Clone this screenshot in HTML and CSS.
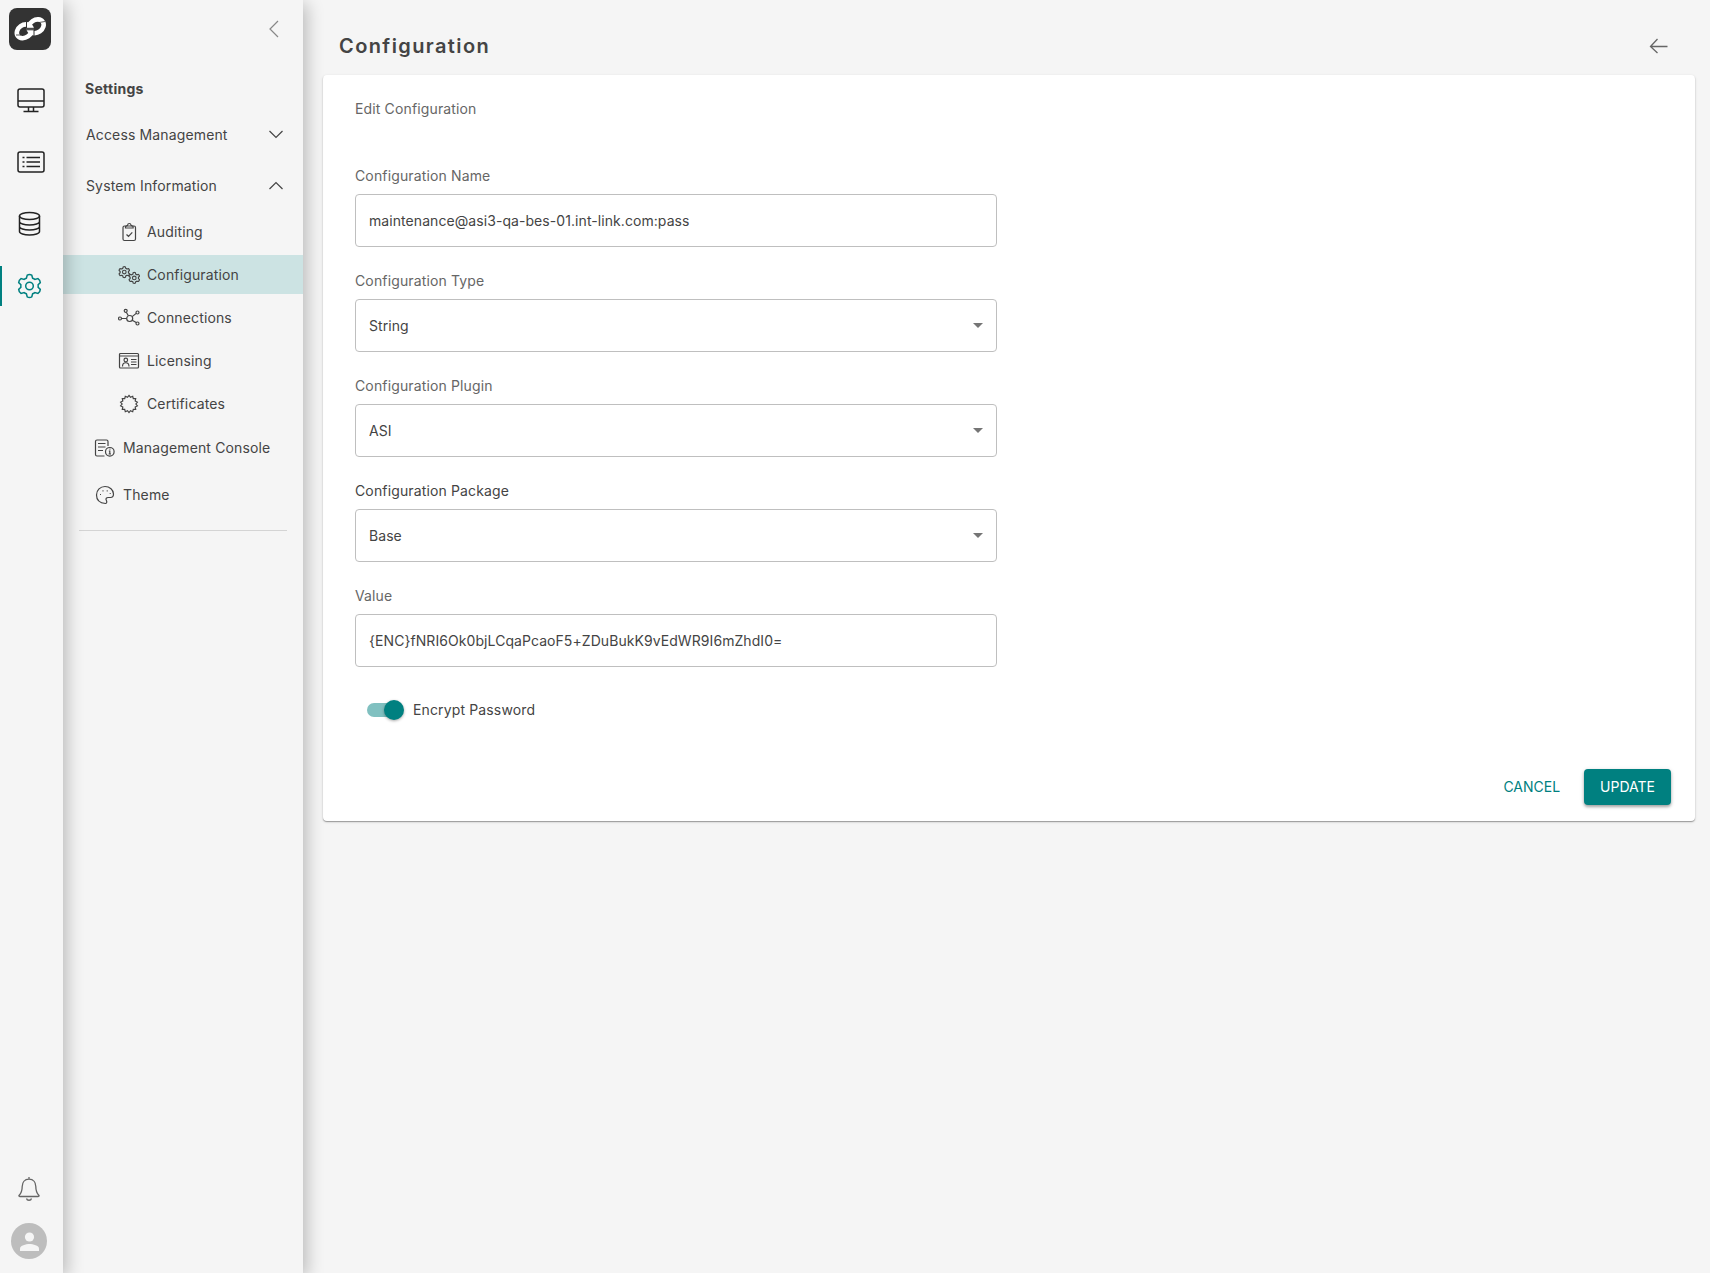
FILE: index.html
```html
<!DOCTYPE html>
<html lang="en">
<head>
<meta charset="utf-8">
<meta name="viewport" content="width=device-width, initial-scale=1">
<title>Configuration</title>
<link rel="stylesheet" href="styles.css">
</head>
<body>
<div class="shell">
  <nav class="rail" aria-label="Main">
    <a class="logo" href="#" aria-label="Home">
      <svg width="42" height="42" viewBox="0 0 42 42">
        <rect width="42" height="42" rx="8" fill="#333"/>
        <g fill="none" stroke="#fff" stroke-width="4.600">
          <ellipse cx="15.300" cy="23.300" rx="8" ry="6.300" transform="rotate(-35 15.300 23.300)"/>
          <ellipse cx="27.200" cy="18.300" rx="8" ry="6.300" transform="rotate(-35 27.200 18.300)"/>
        </g>
        <path d="M17.500 11.500v8.800h7.500M25 30v-8.200h-7.500" fill="none" stroke="#333" stroke-width="1"/>
        <path d="M16.500 21h9.500M7 27h5M30 14.500l6-1" stroke="#333" stroke-width=".8"/>
      </svg>
    </a>
    <ul class="rail-list">
      <li><a class="rail-link" href="#" aria-label="Monitor">
        <svg width="28" height="28" viewBox="0 0 28 28"><rect x="1" y="3" width="26" height="18" rx="2"/><path d="M1 15h26M11.500 21v4M16.500 21v4M6.500 25.500h15"/></svg></a></li>
      <li><a class="rail-link" href="#" aria-label="Lists">
        <svg width="28" height="28" viewBox="0 0 28 28"><rect x="1" y="4" width="26" height="20" rx="2"/><path d="M9.500 9.500H23M9.500 14H23M9.500 18.500H23M5.500 9.500h2M5.500 14h2M5.500 18.500h2"/></svg></a></li>
      <li><a class="rail-link" href="#" aria-label="Data">
        <svg width="28" height="28" viewBox="1 0 28 28"><ellipse cx="13.500" cy="6" rx="10" ry="3.500"/><path d="M3.500 6v15.500c0 2 4.500 3.500 10 3.500s10-1.500 10-3.500V6M3.500 11.500c0 2 4.500 3.500 10 3.500s10-1.500 10-3.500M3.500 16.500c0 2 4.500 3.500 10 3.500s10-1.500 10-3.500"/></svg></a></li>
      <li><a class="rail-link rail-link-active" href="#" aria-label="Settings" aria-current="page">
        <svg width="28" height="28" viewBox="1 0 28 28"><g id="gear"><circle cx="13.500" cy="14" r="3.800"/><path d="M11.200 3.200 Q13.500 2 15.800 3.200 L16.600 6.200 Q17.900 6.600 18.900 7.400 L22 6.600 Q24.200 8 24.300 10.600 L22.100 12.700 Q22.300 14 22.100 15.300 L24.300 17.400 Q24.200 20 22 21.400 L18.900 20.600 Q17.900 21.400 16.600 21.800 L15.800 24.800 Q13.500 26 11.200 24.800 L10.400 21.800 Q9.100 21.400 8.100 20.600 L5 21.400 Q2.800 20 2.700 17.400 L4.900 15.300 Q4.700 14 4.900 12.700 L2.700 10.600 Q2.800 8 5 6.600 L8.100 7.400 Q9.100 6.600 10.400 6.200Z"/></g></svg></a></li>
    </ul>
    <div class="rail-foot">
      <button class="icon-button" type="button" aria-label="Notifications">
        <svg width="24" height="26" viewBox="0 0 24 26" fill="none" stroke="#666" stroke-width="1.300"><path d="M12 1v2.200M12 3.200c-4.500 0-6.800 3.300-6.800 7.300 0 5-1 6.700-3 8.700-.6.700-.4 1.300.6 1.300h18.400c1 0 1.200-.6.600-1.300-2-2-3-3.700-3-8.700 0-4-2.300-7.300-6.800-7.300zM9.500 22.500c.6 2.300 4.400 2.300 5 0"/></svg>
      </button>
      <button class="icon-button" type="button" aria-label="Account">
        <svg width="36" height="36" viewBox="0 0 36 36"><circle cx="18" cy="18" r="18" fill="#bdbdbd"/><circle cx="18.500" cy="14" r="4.600" fill="#f5f5f5"/><path d="M9 28v-2.500c0-3 6-4.600 9.500-4.600S28 22.500 28 25.500V28z" fill="#f5f5f5"/></svg>
      </button>
    </div>
  </nav>

  <aside class="sidebar">
    <button class="icon-button collapse" type="button" aria-label="Collapse menu">
      <svg width="10" height="18" viewBox="0 0 10 18" fill="none" stroke="#888" stroke-width="1.200"><path d="M9 1 1 9l8 8"/></svg>
    </button>
    <h2 class="side-title">Settings</h2>
    <button class="group" type="button" aria-expanded="false">Access Management
      <svg width="16" height="10" viewBox="0 0 16 10"><path d="M1.500 1 8 7.500 14.500 1"/></svg></button>
    <button class="group" type="button" aria-expanded="true">System Information
      <svg width="16" height="10" viewBox="0 0 16 10"><path d="M1.500 8 8 1.500 14.500 8"/></svg></button>
    <ul class="submenu">
      <li><a class="sub-link" href="#">
        <svg width="22" height="20" viewBox="0 0 22 20"><rect x="5" y="4" width="12.500" height="14.500" rx="1.500"/><path d="M7.500 6V4.500l2-1.200c.4-2.400 3.200-2.400 3.600 0l2 1.200V6zM8.500 12.500l2 1.800 3.800-4"/></svg>Auditing</a></li>
      <li><a class="sub-link sub-link-active" href="#" aria-current="page">
        <svg width="22" height="20" viewBox="0 0 22 20"><g stroke-width="2.400"><use href="#gear" transform="translate(-.200 .400) scale(.480)"/><use href="#gear" transform="translate(9.800 6.200) scale(.480)"/></g></svg>Configuration</a></li>
      <li><a class="sub-link" href="#">
        <svg width="22" height="20" viewBox="0 0 22 20"><circle cx="11.700" cy="10.500" r="3"/><circle cx="2" cy="10.500" r="1.500"/><circle cx="7.700" cy="2.800" r="1.500"/><circle cx="19.500" cy="4.500" r="1.500"/><circle cx="19.500" cy="15.500" r="1.500"/><path d="M3.500 10.500h5.200M8.300 4.200l2.100 3.600M14.200 8.600l4-3.200M14.200 12.200l4 2.400"/></svg>Connections</a></li>
      <li><a class="sub-link" href="#">
        <svg width="22" height="20" viewBox="0 0 22 20"><rect x="1.500" y="2.500" width="19" height="14.500" rx="1"/><path d="M1.500 5h19M4.500 15.500c0-5 6.500-5 6.500 0M13 8.500h5.500M13 11h5.500M13 13.500h5.500"/><circle cx="7.800" cy="9" r="1.800"/></svg>Licensing</a></li>
      <li><a class="sub-link" href="#">
        <svg width="22" height="20" viewBox="0 0 22 20"><path d="M11 1.400 12.500 3.300 14.700 2.300 15.300 4.600 17.700 4.600 17.200 7 19.400 8.100 17.900 10 19.400 11.900 17.200 13 17.700 15.400 15.300 15.400 14.700 17.700 12.500 16.700 11 18.600 9.500 16.700 7.300 17.700 6.700 15.400 4.300 15.400 4.800 13 2.600 11.900 4.100 10 2.600 8.100 4.800 7 4.300 4.600 6.700 4.600 7.300 2.300 9.500 3.300Z"/></svg>Certificates</a></li>
    </ul>
    <ul class="menu">
      <li><a class="menu-link" href="#">
        <svg width="22" height="20" viewBox="0 0 22 20"><path d="M10.500 18H3c-.8 0-1.500-.6-1.500-1.500v-13C1.500 2.600 2.200 2 3 2h9.500c.8 0 1.500.6 1.500 1.500V8M4 5.500h7.500M4 9h7.500M4 12.500h5"/><circle cx="15.800" cy="13.800" r="4.300"/><path d="M14.800 13h1v3M14.600 16h2.400M15.500 11.200h.9"/></svg>Management Console</a></li>
      <li><a class="menu-link" href="#">
        <svg width="22" height="20" viewBox="0 0 22 20"><path d="M11.500 18.500C5.500 18 2.500 14.500 2.500 10c0-5 3.800-8.500 8.500-8.500s8.500 3.500 8.500 7.500c0 2.800-1.500 3.500-3 3.500h-2.300c-2 0-2.700 1.400-1.900 2.700.7 1.300.8 3-.8 3.300z"/><path d="M6 9.500h1M8.500 5.800h1M12.700 5.800h1M15.700 8.500h1"/></svg>Theme</a></li>
    </ul>
    <hr class="divider">
  </aside>

  <main class="main">
    <header class="page-head">
      <h1 class="page-title">Configuration</h1>
      <button class="icon-button" type="button" aria-label="Back">
        <svg width="20" height="16" viewBox="0 0 20 16" fill="none" stroke="#666" stroke-width="1.300"><path d="M18.500 8.500H1.500M8.500 1l-7 7.500L8.500 15"/></svg>
      </button>
    </header>
    <form class="card">
      <div class="form-body">
        <p class="form-caption">Edit Configuration</p>
        <div class="fields">
          <div class="field">
            <label for="name">Configuration Name</label>
            <input class="control" id="name" type="text" value="maintenance@asi3-qa-bes-01.int-link.com:pass">
          </div>
          <div class="field">
            <label for="type">Configuration Type</label>
            <div class="select">
              <select class="control" id="type"><option>String</option></select>
              <svg width="10" height="5" viewBox="0 0 10 5"><path d="M0 0h10L5 5z"/></svg>
            </div>
          </div>
          <div class="field">
            <label for="plugin">Configuration Plugin</label>
            <div class="select">
              <select class="control" id="plugin"><option>ASI</option></select>
              <svg width="10" height="5" viewBox="0 0 10 5"><path d="M0 0h10L5 5z"/></svg>
            </div>
          </div>
          <div class="field">
            <label class="label-strong" for="package">Configuration Package</label>
            <div class="select">
              <select class="control" id="package"><option>Base</option></select>
              <svg width="10" height="5" viewBox="0 0 10 5"><path d="M0 0h10L5 5z"/></svg>
            </div>
          </div>
          <div class="field">
            <label for="value">Value</label>
            <input class="control" id="value" type="text" value="{ENC}fNRI6Ok0bjLCqaPcaoF5+ZDuBukK9vEdWR9I6mZhdI0=">
          </div>
          <label class="toggle"><input class="switch" type="checkbox" role="switch" checked>Encrypt Password</label>
        </div>
      </div>
      <div class="actions">
        <button class="button" type="button">CANCEL</button>
        <button class="button button-primary" type="submit">UPDATE</button>
      </div>
    </form>
  </main>
</div>
</body>
</html>
```
FILE: styles.css
```css
* {
  box-sizing: border-box;
}

body {
  margin: 0;
  background: #f5f5f5;
  color: #444;
  font-family: Inter, "Liberation Sans", sans-serif;
  font-size: 14px;
  line-height: 20px;
}

button,
input,
select {
  font: inherit;
  color: inherit;
}

ul {
  list-style: none;
  margin: 0;
  padding: 0;
}

a {
  color: inherit;
  text-decoration: none;
}

svg {
  display: block;
  flex: none;
}

.shell {
  display: grid;
  grid-template-columns: 63px 240px 1fr;
  min-height: 100vh;
}

/* Icon rail */
.rail {
  z-index: 2;
  display: flex;
  flex-direction: column;
  align-items: center;
  padding: 8px 3px 14px 0;
  background: #f5f5f5;
  box-shadow: 4px 4px 16px rgba(0, 0, 0, .24);
}

.rail-list {
  display: flex;
  flex-direction: column;
  gap: 22px;
  width: 100%;
  margin-top: 30px;
}

.rail-link {
  display: flex;
  align-items: center;
  justify-content: center;
  height: 40px;
  border-left: 2px solid transparent;
  fill: none;
  stroke: #222;
  stroke-width: 1.5;
}

.rail-link-active {
  border-color: #008080;
  stroke: #008080;
}

.rail-foot {
  display: flex;
  flex-direction: column;
  align-items: center;
  gap: 21px;
  margin-top: auto;
  padding-right: 2px;
}

.icon-button {
  padding: 0;
  border: 0;
  background: none;
  cursor: pointer;
}

/* Settings menu */
.sidebar {
  z-index: 1;
  display: flex;
  flex-direction: column;
  background: #f5f5f5;
  box-shadow: 4px 4px 16px rgba(0, 0, 0, .24);
  letter-spacing: .01em;
}

.collapse {
  align-self: flex-end;
  margin: 20px 24px 0 0;
}

.side-title {
  margin: 41px 0 10px;
  padding-left: 22px;
  font-size: 14px;
  font-weight: 700;
  letter-spacing: .02em;
}

.group {
  display: flex;
  align-items: center;
  justify-content: space-between;
  height: 51px;
  padding: 0 19px 0 23px;
  border: 0;
  background: none;
  letter-spacing: inherit;
  text-align: left;
}

.group svg,
.sub-link svg,
.menu-link svg {
  fill: none;
  stroke: #444;
  stroke-width: 1.2;
}

.submenu {
  display: flex;
  flex-direction: column;
  gap: 4px;
  padding: 1px 0;
}

.sub-link,
.menu-link {
  display: flex;
  align-items: center;
}

.sub-link {
  gap: 7px;
  height: 39px;
  padding-left: 55px;
}

.sub-link-active {
  background: #cce3e3;
}

.menu-link {
  gap: 7px;
  height: 47px;
  padding-left: 31px;
}

.divider {
  width: calc(100% - 32px);
  margin: 12px 16px 0;
  border: 0;
  border-top: 1px solid #d4d4d4;
}

/* Page */
.main {
  min-width: 0;
  padding: 17px 15px 24px 20px;
}

.page-head {
  display: flex;
  align-items: center;
  justify-content: space-between;
  height: 58px;
  padding: 0 26px 0 16px;
}

.page-title {
  margin: 0;
  font-size: 20px;
  font-weight: 600;
  letter-spacing: .07em;
}

.card {
  padding: 24px 24px 16px;
  border-radius: 4px;
  background: #fff;
  box-shadow: 0 1px 1px rgba(0, 0, 0, .3), 0 1px 3px rgba(0, 0, 0, .15);
}

.form-body {
  padding: 0 8px;
  letter-spacing: .01em;
}

.form-caption {
  margin: 0 0 47px;
  color: #666;
}

.fields {
  display: flex;
  flex-direction: column;
  gap: 24px;
  width: calc(50% - 12px);
}

.field {
  display: flex;
  flex-direction: column;
  gap: 8px;
  color: #666;
}

.label-strong {
  color: #444;
}

.control {
  width: 100%;
  height: 53px;
  padding: 0 13px;
  border: 1px solid #bfbfbf;
  border-radius: 4px;
  background: #fff;
  color: #444;
  letter-spacing: .005em;
  appearance: none;
}

.select {
  display: grid;
  align-items: center;
}

.select > * {
  grid-area: 1 / 1;
}

.select svg {
  justify-self: end;
  margin-right: 14px;
  fill: #757575;
  pointer-events: none;
}

.toggle {
  display: flex;
  align-items: center;
  gap: 9px;
  height: 38px;
  padding-left: 12px;
}

.switch {
  display: flex;
  align-items: center;
  width: 37px;
  height: 20px;
  margin: 0;
  appearance: none;
}

.switch::before {
  content: "";
  width: 34px;
  height: 14px;
  border-radius: 7px;
  background: #80c0c0;
}

.switch::after {
  content: "";
  width: 20px;
  height: 20px;
  margin-left: -17px;
  border-radius: 50%;
  background: #008080;
  box-shadow: 0 1px 3px rgba(0, 0, 0, .35);
}

.actions {
  display: flex;
  justify-content: flex-end;
  gap: 8px;
  margin-top: 40px;
}

.button {
  height: 36px;
  padding: 0 16px;
  border: 0;
  border-radius: 4px;
  background: none;
  color: #008080;
  cursor: pointer;
}

.button-primary {
  background: #008080;
  color: #fff;
  box-shadow: 0 2px 3px rgba(0, 0, 0, .3), 0 1px 5px rgba(0, 0, 0, .12);
}
```
